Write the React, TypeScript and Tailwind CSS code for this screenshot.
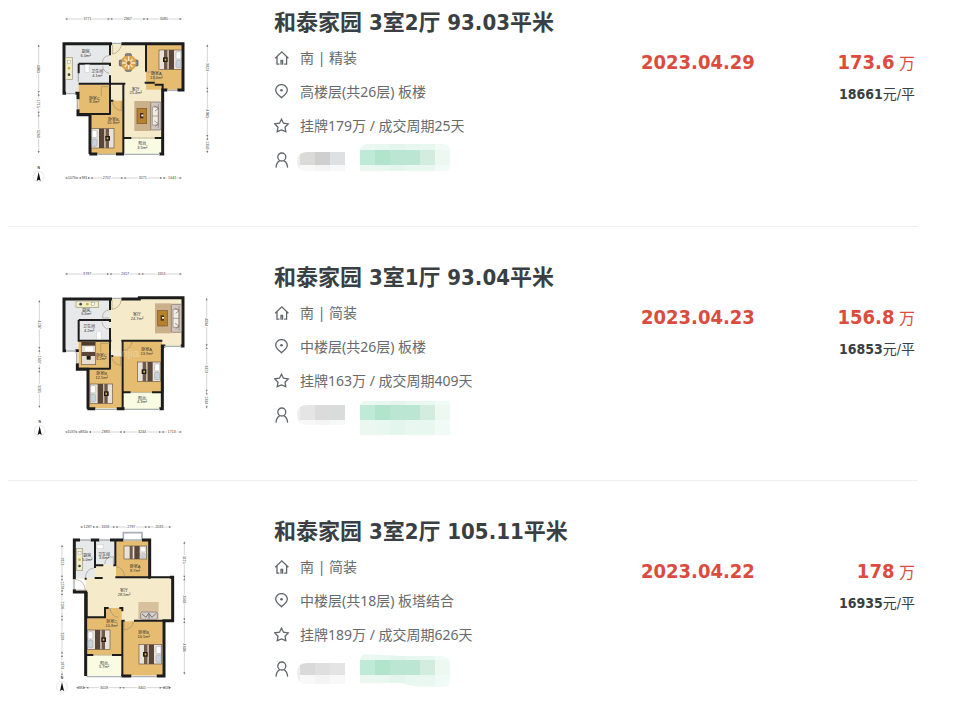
import type { ReactNode } from "react";

const WALL = "#1c1c1c";
const WOOD = "#e6bd70";
const STONE = "#f5ebcb";
const TILE = "#e7e8e9";
const BALCONY = "#f9fce3";

type Pt = { x: number; y: number };

function Label({ x, y, name, area }: Pt & { name: string; area: string }) {
  return (
    <text x={x} y={y} textAnchor="middle" fontSize="12" fill="#333">
      <tspan>{name}</tspan>
      <tspan x={x} dy="11">
        {area}m²
      </tspan>
    </text>
  );
}

function Room({ x, y, w, h, fill }: Pt & { w: number; h: number; fill: string }) {
  return <rect x={x} y={y} width={w} height={h} fill={fill} />;
}

// head of the bed is on the left, flip turns it round
function Bed({ x, y, w = 68, flip = false }: Pt & { w?: number; flip?: boolean }) {
  return (
    <g transform={flip ? `translate(${x + w} ${y}) scale(-1 1)` : `translate(${x} ${y})`}>
      <rect width={w} height="58" fill="#e9e2d8" stroke="#6b5a48" strokeWidth="2" />
      <rect x="2" y="5" width="15" height="22" rx="4" fill="#fff" stroke="#a8adb5" strokeWidth="2" />
      <rect x="2" y="31" width="15" height="22" rx="4" fill="#c9d2dc" stroke="#a8adb5" strokeWidth="2" />
      <rect x="23" width="16" height="58" fill="#5a4638" />
      <rect x="39" y="1" width="4" height="56" fill="#c9bba8" />
      <rect x="43" width="10" height="58" fill="#6f5948" />
      <rect x="42" y="22" width="14" height="14" fill="#201a16" />
      <rect x="46" y="26" width="5" height="6" fill="#d8b64a" />
    </g>
  );
}

function Sofa({ x, y }: Pt) {
  return (
    <g transform={`translate(${x} ${y})`}>
      <rect width="50" height="90" fill="#cbb08c" />
      <rect x="8" y="22" width="29" height="46" fill="#b5802f" stroke="#7d5520" strokeWidth="2" />
      <rect x="17" y="36" width="10" height="16" fill="#4b3218" />
      <rect x="21" y="41" width="6" height="5" fill="#fff" />
      <rect x="49" y="3" width="31" height="84" rx="4" fill="#cfc6bf" stroke="#75665c" strokeWidth="2" />
      <path d="M54 18H72V72H54ZM54 45H72M72 8V82" fill="#f1ece6" stroke="#8b7d73" strokeWidth="2" />
      <path d="M60 14l12 8-10 8M60 60l12 8-10 8" fill="none" stroke="#75665c" strokeWidth="2" />
    </g>
  );
}

function Compass({ x, y }: Pt) {
  return (
    <g transform={`translate(${x} ${y})`}>
      <circle r="16" fill="none" stroke="#bbb" />
      <path d="M0-14L6 13L0 9L-6 13Z" fill="#111" />
      <text y="-22" textAnchor="middle" fontSize="10" fontWeight="bold" fill="#333">
        N
      </text>
    </g>
  );
}

// one chain of measured lengths along a side of the plan
function Ruler({ at, stops, values, vertical = false }: { at: number; stops: number[]; values: string[]; vertical?: boolean }) {
  return (
    <g>
      {values.map((value, i) => {
        const a = stops[i];
        const b = stops[i + 1];
        const mid = (a + b) / 2;
        const half = Math.min(14, (b - a) / 2 - 4);
        return (
          <g key={i} transform={vertical ? `translate(${at} 0) rotate(90)` : `translate(0 ${at})`}>
            <path d={`M${a + 3} 0H${mid - half}M${mid + half} 0H${b - 3}`} stroke="#aaa" strokeWidth="1.5" />
            <path d={`M${a} 0l7-3v6ZM${b} 0l-7-3v6Z`} fill="#777" />
            <text x={mid} y="4" textAnchor="middle" fontSize="11" fill="#444">
              {value}
            </text>
          </g>
        );
      })}
    </g>
  );
}

function Stove({ x, y, w, h }: Pt & { w: number; h: number }) {
  const tall = h > w;
  return (
    <g transform={`translate(${x} ${y})`}>
      <rect width={w} height={h} fill="#f1edca" stroke="#9b967b" strokeWidth="2" />
      <circle cx={tall ? w / 2 : 14} cy={tall ? h - 14 : h / 2} r="4" fill="#444" />
      <circle cx={w / 2} cy={h / 2} r="4" fill="#d1b13b" />
      <rect x={tall ? 5 : w - 22} y={tall ? 9 : 5} width="9" height="9" fill="#fff" stroke="#777" />
    </g>
  );
}

function Plan({ viewBox, title, children }: { viewBox: string; title: string; children: ReactNode }) {
  return (
    <svg
      viewBox={viewBox}
      role="img"
      aria-label={title}
      className="h-[181px] w-[190px] shrink-0 font-['Liberation_Sans','Noto_Sans_CJK_SC',sans-serif]"
    >
      {children}
    </svg>
  );
}

function PlanOne() {
  return (
    <Plan viewBox="0 -6 570 543" title="户型图">
      <path d="M102 101H459V240H398V432H180V314H144V250H102Z" fill={STONE} />
      <Room x={104} y={104} w={136} h={118} fill={TILE} />
      <Room x={104} y={220} w={40} h={30} fill={TILE} />
      <Room x={348} y={104} w={110} h={135} fill={WOOD} />
      <Room x={146} y={224} w={94} h={88} fill={WOOD} />
      <Room x={182} y={314} w={98} h={118} fill={WOOD} />
      <Room x={242} y={272} w={37} h={45} fill={WOOD} />
      <Room x={282} y={386} w={115} h={46} fill={BALCONY} />
      <path d="M240 101H246M274 101H459V240H442M412 240H398V432H388M178 432H202M258 432H282M180 432V314H144V298M144 268V250H136M108 250H102V101H240" fill="none" stroke={WALL} strokeWidth="9" />
      <path d="M246 100H274M108 251H136M412 241H442M202 433H258M282 433H390M142 268V298M145 190V215" fill="none" stroke="#a9b1b4" strokeWidth="4" />
      <path d="M240 104V136M146 161H240V168M146 161V190M146 221H286M240 196V222M240 224V312M144 312H242M348 104V185M344 218H374M280 221V270M280 262V430M280 384H304M374 384H398M398 240V224H374M240 272H250" fill="none" stroke={WALL} strokeWidth="6" />
      <path d="M248 104V132Q268 128 274 106M238 136Q216 140 218 158H238M218 168Q220 186 238 190M346 186H374V214M242 230H214V258M246 274Q252 300 274 302V274M304 384H374" fill="none" stroke="#8b8064" strokeWidth="1.5" />
      <Stove x={107} y={142} w={20} h={66} />
      <rect x="165" y="164" width="14" height="24" fill="#fff" stroke="#aaa" />
      <g>
        <g fill="#8b8681" stroke="#514a45" strokeWidth="2">
          <rect x="286" y="131" width="18" height="12" rx="3" />
          <rect x="286" y="172" width="18" height="12" rx="3" />
          <rect x="268" y="150" width="12" height="18" rx="3" />
          <rect x="312" y="150" width="12" height="18" rx="3" />
        </g>
        <path d="M284 138H308L317 147V170L308 179H284L275 170V147Z" fill="#dca24d" />
        <path d="M296 139V178M276 159H316M284 147l24 24M308 147l-24 24" stroke="#f7e8c5" strokeWidth="4" />
        <circle cx="296" cy="159" r="6" fill="#a76f31" />
      </g>
      <Bed x={387} y={120} flip />
      <Bed x={184} y={356} />
      <Sofa x={313} y={273} />
      <Label x={167} y={130} name="厨房" area="6.0" />
      <Label x={202} y={190} name="卫生间" area="4.1" />
      <Label x={379} y={195} name="卧室A" area="13.0" />
      <Label x={193} y={269} name="卧室C" area="8.4" />
      <Label x={317} y={242} name="客厅" area="25.4" />
      <Label x={250} y={332} name="卧室B" area="10.8" />
      <Label x={337} y={405} name="阳台" area="3.5" />
      <Ruler at={27} stops={[105, 240, 347, 456]} values={["3771", "2967", "3080"]} />
      <Ruler at={504} stops={[105, 146, 181, 280, 397, 456]} values={["1076", "981", "2707", "3271", "1641"]} />
      <Ruler vertical at={26} stops={[103, 250, 312, 430]} values={["4083", "1715", "3269"]} />
      <Ruler vertical at={532} stops={[103, 240, 382, 430]} values={["3829", "4083", "1350"]} />
      <Compass x={26} y={500} />
    </Plan>
  );
}

function PlanTwo() {
  return (
    <Plan viewBox="0 -3 570 543" title="户型图">
      <path d="M102 105H328V101H459V246H397V434H174V316H142V260H102Z" fill={STONE} />
      <Room x={104} y={108} w={136} h={122} fill={TILE} />
      <Room x={104} y={228} w={38} h={32} fill={TILE} />
      <Room x={146} y={232} w={94} h={82} fill={WOOD} />
      <Room x={176} y={316} w={102} h={116} fill={WOOD} />
      <Room x={242} y={276} w={36} h={45} fill={WOOD} />
      <Room x={280} y={232} w={116} h={152} fill={WOOD} />
      <Room x={280} y={388} w={116} h={45} fill={BALCONY} />
      <path d="M274 105H328V101H459V246H452M406 246H397V434H388M172 434H196M260 434H284M174 434V316H142V298M142 264V260H136M108 260H102V105H246" fill="none" stroke={WALL} strokeWidth="9" />
      <path d="M246 103H274M108 261H138M402 247H454M196 436H260M284 436H390M140 266V298M146 180V210" fill="none" stroke="#a9b1b4" strokeWidth="4" />
      <path d="M240 108V138M146 168H240V174M146 168V230H244M240 192V230M240 232V314M142 314H242M240 276H250M278 230V434M274 230H397M278 385H302M366 385H397M397 246V385" fill="none" stroke={WALL} strokeWidth="6" />
      <path d="M246 108V136Q270 132 274 108M238 138Q216 140 218 162H238M216 174Q218 192 238 196M280 234V260Q302 256 306 234M240 238H212V264M244 278Q250 302 272 304V278M302 385H366" fill="none" stroke="#8b8064" strokeWidth="1.5" />
      <Stove x={138} y={111} w={68} h={19} />
      <rect x="200" y="202" width="14" height="24" rx="3" fill="#fff" stroke="#aaa" />
      <g>
        <rect x="155" y="234" width="42" height="68" fill="#e7ded1" stroke="#6b5a48" strokeWidth="2" />
        <rect x="155" y="234" width="40" height="11" fill="#503c2d" />
        <rect x="165" y="248" width="24" height="14" rx="3" fill="#fff" />
        <rect x="155" y="264" width="40" height="12" fill="#5a4638" />
        <rect x="170" y="276" width="12" height="11" fill="#201a16" />
      </g>
      <Bed x={323} y={294} flip />
      <Bed x={180} y={360} />
      <Sofa x={375} y={118} />
      <Label x={169} y={143} name="厨房" area="6.6" />
      <Label x={177} y={193} name="卫生间" area="4.2" />
      <Label x={321} y={157} name="客厅" area="24.7" />
      <Label x={214} y={278} name="卧室C" area="6.2" />
      <Label x={350} y={261} name="卧室A" area="13.9" />
      <Label x={215} y={334} name="卧室B" area="12.5" />
      <Label x={336} y={407} name="阳台" area="4.3" />
      <text x="284" y="278" textAnchor="middle" fontSize="34" fill="#fff" opacity="0.3">
        lianjia
      </text>
      <Ruler at={30} stops={[105, 238, 333, 456]} values={["3787", "2657", "3353"]} />
      <Ruler at={504} stops={[105, 144, 176, 278, 394, 456]} values={["1037", "892", "2883", "3244", "1713"]} />
      <Ruler vertical at={28} stops={[108, 256, 318, 432]} values={["4207", "1697", "3285"]} />
      <Ruler vertical at={530} stops={[102, 248, 384, 434]} values={["4034", "3929", "1394"]} />
      <Compass x={29} y={500} />
    </Plan>
  );
}

function PlanThree() {
  return (
    <Plan viewBox="-60 -3 570 543" title="户型图">
      <path d="M73 66H299V178H368V308H342V474H107V222H73Z" fill={STONE} />
      <path d="M75 182H107V222H75Z" fill="#fff" />
      <Room x={77} y={68} w={57} h={112} fill={TILE} />
      <Room x={137} y={68} w={58} h={72} fill={TILE} />
      <Room x={198} y={68} w={97} h={110} fill={WOOD} />
      <Room x={111} y={300} w={104} h={110} fill={WOOD} />
      <Room x={165} y={270} w={50} h={34} fill={WOOD} />
      <Room x={218} y={310} w={120} h={162} fill={WOOD} />
      <Room x={111} y={414} w={104} h={60} fill={BALCONY} />
      <path d="M220 66V44H276V66" fill="#fff" stroke="#a7aeb8" strokeWidth="5" />
      <path d="M90 66H73V184M122 66H148M180 66H220M276 66H299V178H302M360 178H368V308H342V474H320M244 474H214M107 474V222H73V214" fill="none" stroke={WALL} strokeWidth="9" />
      <path d="M90 66H122M148 66H180M220 66H276M302 178H360M110 476H214M244 476H320M72 184V214" fill="none" stroke="#a9b1b4" strokeWidth="4" />
      <path d="M135 68V150M135 142H160M190 142H197M196 68V144M196 178H299M134 180H158M104 182H110M110 222V298H165V270H176M208 270H217V280M217 306V474M217 308H224M252 308H342M107 411H130M186 411H217M299 178H366" fill="none" stroke={WALL} strokeWidth="6" />
      <path d="M106 180Q108 152 132 150M76 184Q104 188 106 216H76M164 138Q166 116 190 116V138M198 146Q222 150 224 176M180 270Q182 296 206 298M222 310V336Q248 332 250 310M130 411H186" fill="none" stroke="#8b8064" strokeWidth="1.5" />
      <Stove x={79} y={92} w={19} h={66} />
      <path d="M140 80H160V92H140Z" fill="#fff" stroke="#aaa" />
      <g transform="translate(222 84)">
        <rect width="68" height="39" fill="#e9e2d8" stroke="#6b5a48" strokeWidth="2" />
        <rect x="17" width="9" height="39" fill="#6f5948" />
        <rect x="31" width="16" height="39" fill="#5a4638" />
        <rect x="50" y="3" width="14" height="14" rx="3" fill="#fff" stroke="#a8adb5" />
        <rect x="50" y="21" width="14" height="14" rx="3" fill="#c9d2dc" stroke="#a8adb5" />
      </g>
      <g>
        <rect x="265" y="252" width="61" height="52" fill="#d8c09c" />
        <rect x="272" y="282" width="50" height="22" rx="4" fill="#d5d1cf" stroke="#756e6b" strokeWidth="2" />
        <path d="M276 288l12 10 8-12 10 12 12-12M297 286v16" fill="none" stroke="#756e6b" strokeWidth="3" />
      </g>
      <Bed x={112} y={336} />
      <Bed x={267} y={380} flip />
      <Label x={112} y={118} name="厨房" area="5.0" />
      <Label x={162} y={113} name="卫生间" area="3.6" />
      <Label x={255} y={150} name="卧室A" area="8.7" />
      <Label x={222} y={223} name="客厅" area="28.5" />
      <Label x={185} y={316} name="卧室C" area="10.8" />
      <Label x={281} y={348} name="卧室B" area="16.5" />
      <Label x={162} y={440} name="阳台" area="5.7" />
      <Ruler at={27} stops={[90, 136, 196, 292, 364]} values={["1287", "1658", "2797", "2033"]} />
      <Ruler at={509} stops={[78, 108, 216, 336, 364]} values={["883", "3018", "3401", "809"]} />
      <Ruler vertical at={36} stops={[80, 180, 224, 300, 410, 474]} values={["2813", "1228", "2106", "3103", "1879"]} />
      <Ruler vertical at={403} stops={[70, 180, 308, 470]} values={["3115", "3568", "4604"]} />
      <Compass x={36} y={506} />
    </Plan>
  );
}

function LineIcon({ children }: { children: ReactNode }) {
  return (
    <svg viewBox="0 0 16 16" className="size-4 shrink-0" fill="none" stroke="#60676a" strokeWidth="1.3" aria-hidden="true">
      {children}
    </svg>
  );
}

const HomeIcon = () => (
  <LineIcon>
    <path d="M1.2 8.2L7.8 1.8L14.4 8.2M3 7V14.2H5.4M12.6 7V14.2H10.2" />
    <path d="M7 14.8V10.5H8.6V14.8" />
  </LineIcon>
);

const PinIcon = () => (
  <LineIcon>
    <path d="M7.5 13.8C4.6 11 1.7 9 1.7 6.2A5.8 5.6 0 0 1 13.3 6.2C13.3 9 10.4 11 7.5 13.8Z" />
    <circle cx="7.5" cy="6.3" r="1.3" fill="#60676a" stroke="none" />
  </LineIcon>
);

const StarIcon = () => (
  <LineIcon>
    <path d="M7.5 1.2L9.5 5.2L14.2 5.9L11 9.2L11.8 13.7L7.5 11.9L3.2 13.7L4 9.2L0.8 5.9L5.5 5.2Z" />
  </LineIcon>
);

const UserIcon = () => (
  <LineIcon>
    <circle cx="7.8" cy="5" r="4" />
    <path d="M2 15.6C2.2 11.6 4 9.6 5.8 8.6M13.6 15.6C13.4 11.6 11.6 9.6 9.8 8.6" />
  </LineIcon>
);

type Mosaic = {
  grid: number;
  gray: string[];
  grayTop: number;
  grayBottom: number;
  greenClip: string;
};

const greens = ["#bfead7", "#b2e4cd", "#bbe6d3", "#bbe6d3", "#d2ecdf", "#edf8f2"];
const greenPale = ["#ebf8f2", "#e9f7f1", "#e3f5ec", "#e9f7f1", "#e9f7f1", "#f0faf6"];
const grayPale = ["#f8f8f8", "#f4f4f4", "#f8f8f8"];

// pixelated agent name and company
function HiddenAgent({ id, mosaic }: { id: string; mosaic: Mosaic }) {
  const { grid, gray, grayTop, grayBottom, greenClip } = mosaic;
  return (
    <svg width="153" height="34" className="overflow-visible" aria-hidden="true" shapeRendering="crispEdges">
      <clipPath id={`${id}-gray`}>
        <path d={`M48 ${grayTop}H10Q0 ${grayTop} 0 ${grayTop + 10}Q0 ${grayBottom} 10 ${grayBottom}H48Z`} />
      </clipPath>
      <clipPath id={`${id}-green`}>
        <path d={greenClip} />
      </clipPath>
      <g clipPath={`url(#${id}-gray)`}>
        <rect width="3" height="40" fill="#eeeeee" />
        {gray.map((fill, i) => (
          <g key={i}>
            <rect x={3 + i * 15} y="0" width="15" height="40" fill={grayPale[i]} />
            <rect x={3 + i * 15} y={grid} width="15" height="15" fill={fill} />
          </g>
        ))}
      </g>
      <g clipPath={`url(#${id}-green)`}>
        {greens.map((fill, i) => (
          <g key={i}>
            <rect x={63 + i * 15} y="0" width="15" height="40" fill={greenPale[i]} />
            <rect x={63 + i * 15} y={grid} width="15" height="15" fill={fill} />
          </g>
        ))}
      </g>
    </svg>
  );
}

const deals = [
  {
    id: "d1",
    plan: <PlanOne />,
    title: "和泰家园 3室2厅 93.03平米",
    facing: "南 | 精装",
    floor: "高楼层(共26层) 板楼",
    cycle: "挂牌179万 / 成交周期25天",
    date: "2023.04.29",
    total: "173.6",
    unit: "18661",
    mosaic: {
      grid: 7,
      gray: ["#dadad9", "#cfcfd0", "#dfe0e2"],
      grayTop: 9,
      grayBottom: 28,
      greenClip: "M63 6Q65 1 71 1H146Q153 1 153 8V22Q153 28 147 28H63Z",
    },
  },
  {
    id: "d2",
    plan: <PlanTwo />,
    title: "和泰家园 3室1厅 93.04平米",
    facing: "南 | 简装",
    floor: "中楼层(共26层) 板楼",
    cycle: "挂牌163万 / 成交周期409天",
    date: "2023.04.23",
    total: "156.8",
    unit: "16853",
    mosaic: {
      grid: 7,
      gray: ["#e5e5e5", "#dbdbdc", "#dadcdc"],
      grayTop: 7,
      grayBottom: 27,
      greenClip: "M63 7Q64 3 69 3H153V37H63Z",
    },
  },
  {
    id: "d3",
    plan: <PlanThree />,
    title: "和泰家园 3室2厅 105.11平米",
    facing: "南 | 简装",
    floor: "中楼层(共18层) 板塔结合",
    cycle: "挂牌189万 / 成交周期626天",
    date: "2023.04.22",
    total: "178",
    unit: "16935",
    mosaic: {
      grid: 8,
      gray: ["#d9d9d9", "#dfdfdf", "#e4e4e4"],
      grayTop: 11,
      grayBottom: 32,
      greenClip: "M63 7Q64 2 70 2L105 4H145Q153 5 153 12V28Q153 35 145 35L115 34L105 31H63Z",
    },
  },
];

function InfoRow({ icon, children }: { icon: ReactNode; children: ReactNode }) {
  return (
    <div className="flex h-[34px] items-center gap-[10px] text-sm text-[#666b6e]">
      {icon}
      <span className="whitespace-nowrap">{children}</span>
    </div>
  );
}

export default function App() {
  return (
    <main className="bg-white font-['Noto_Sans','Noto_Sans_CJK_SC',sans-serif]">
      <ul className="mr-[35px] ml-2">
        {deals.map((deal) => (
          <li
            key={deal.id}
            className="flex border-b border-[#efefef] py-9 pl-[22px] first:pt-2 first:pb-[37px] last:border-0"
          >
            {deal.plan}
            <div className="ml-[54px] min-w-0 flex-1">
              <h2 className="mb-[3px] font-['DejaVu_Sans_Condensed','Noto_Sans_CJK_SC',sans-serif] text-[22px] leading-[30px] font-bold whitespace-nowrap text-[#394043]">
                <a href="#">{deal.title}</a>
              </h2>
              <InfoRow icon={<HomeIcon />}>{deal.facing}</InfoRow>
              <InfoRow icon={<PinIcon />}>{deal.floor}</InfoRow>
              <InfoRow icon={<StarIcon />}>{deal.cycle}</InfoRow>
              <div className="flex h-[34px] items-center gap-[7px]">
                <UserIcon />
                <HiddenAgent id={deal.id} mosaic={deal.mosaic} />
              </div>
            </div>
            <div className="flex w-[277px] shrink-0 justify-between pt-10 pr-[3px] font-['DejaVu_Sans_Condensed','Noto_Sans_CJK_SC',sans-serif]">
              <p className="text-xl leading-7 font-bold text-[#db4c3f]">{deal.date}</p>
              <div className="text-right">
                <p className="text-base leading-7 text-[#db4c3f]">
                  <span className="text-xl font-bold">{deal.total}</span> 万
                </p>
                <p className="mt-1 text-sm leading-6 text-[#394043]">
                  <span className="font-bold">{deal.unit}</span>元/平
                </p>
              </div>
            </div>
          </li>
        ))}
      </ul>
    </main>
  );
}
